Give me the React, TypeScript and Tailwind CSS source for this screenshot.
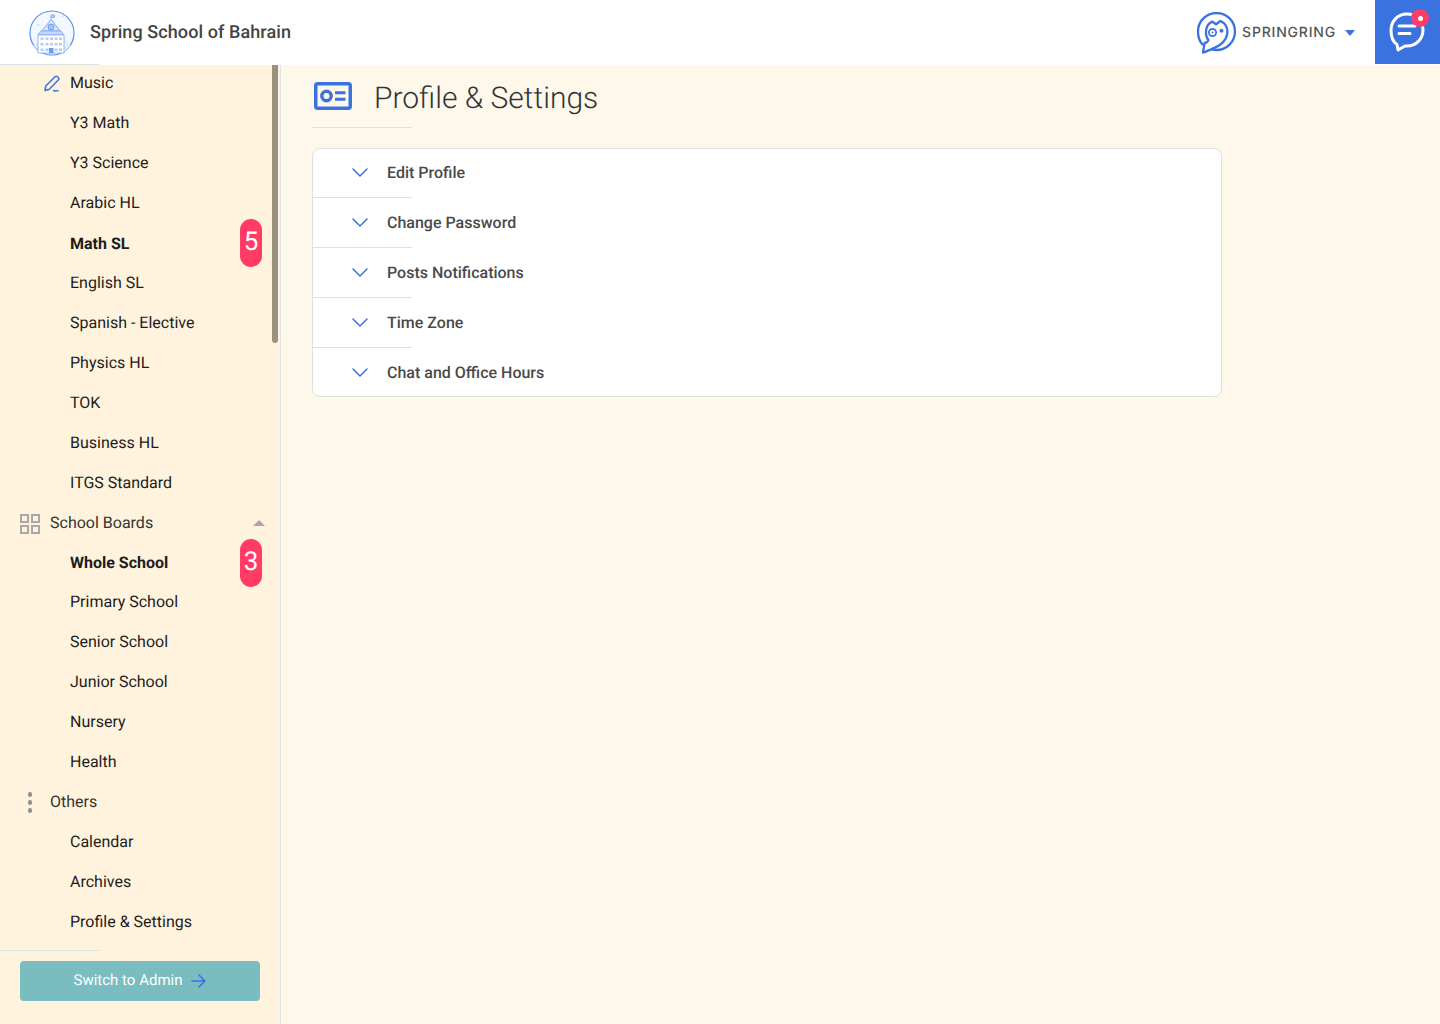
const topCourses = ['Y3 Math', 'Y3 Science', 'Arabic HL'];
const midCourses = ['English SL', 'Spanish - Elective', 'Physics HL', 'TOK', 'Business HL', 'ITGS Standard'];
const boards = ['Primary School', 'Senior School', 'Junior School', 'Nursery', 'Health'];
const others = ['Calendar', 'Archives', 'Profile & Settings'];
const sections = ['Edit Profile', 'Change Password', 'Posts Notifications', 'Time Zone', 'Chat and Office Hours'];

function SchoolLogo() {
  return (
    <svg width="46" height="46" viewBox="0 0 46 46" fill="none">
      <circle cx="23" cy="23" r="22" fill="#F3F7FE" stroke="#5A8FEF" strokeWidth="1.2" />
      <path d="M5 36c4-9 10-12 18-12s14 3 18 12l-6 6H11z" fill="#E6EEFC" />
      <path d="M22 9V5h3.500v2.500H22" stroke="#8FB0F3" strokeWidth="1" fill="#B4CBF8" />
      <path d="M13 21 22 9.500 31 21z" fill="#DCE8FC" stroke="#7FA6F2" strokeWidth="1" strokeLinejoin="round" />
      <circle cx="22" cy="17" r="3" fill="#A9C4F7" stroke="#5A8FEF" strokeWidth="0.8" />
      <path d="M9 25l3-4h20l3 4z" fill="#C5D8FA" stroke="#7FA6F2" strokeWidth="0.8" />
      <rect x="9" y="25" width="26" height="18" fill="#fff" stroke="#7FA6F2" strokeWidth="0.8" />
      <path
        d="M11.500 27.500h3v2.500h-3zM16.500 27.500h3v2.500h-3zM21 27.500h3v2.500h-3zM25.500 27.500h3v2.500h-3zM30 27.500h3v2.500h-3zM11.500 33h3v2.500h-3zM16.500 33h3v2.500h-3zM21 33h3v2.500h-3zM25.500 33h3v2.500h-3zM30 33h3v2.500h-3zM11.500 38.500h3v2.500h-3zM16.500 38.500h3v2.500h-3zM25.500 38.500h3v2.500h-3zM30 38.500h3v2.500h-3z"
        fill="#B4CBF8"
      />
      <rect x="20" y="38" width="4.500" height="5" fill="#6E9BF0" />
      <path d="M33 6.500l2.500-1M8 14.500l2.500 .8" stroke="#B4CBF8" strokeWidth="0.8" />
    </svg>
  );
}

function OwlLogo() {
  return (
    <svg width="40" height="42" viewBox="0 0 40 42" fill="none" stroke="#3A72E0" strokeWidth="2.300" strokeLinejoin="round" strokeLinecap="round">
      <path d="M5.500 32.500C2.500 29.200 1 24.600 1 19.500 1 9.300 9.300 1 19.500 1S38 9.300 38 19.500 29.700 38 19.500 38c-1.600 0-3-.2-4.500-.6" />
      <path d="M6 40.500 7.600 31c1.600-.2 3.400-1.500 3.900-2.800C9.600 25.800 8.700 22.600 9 19c.4-4.500 2.800-8 6.400-9.300l3.600 2.600 4.500-3.300 3.500 2.200c3 3 4 7.500 3 11.800-1.400 6.300-6.500 10.200-12 12.600-4.500 2-8 3.600-11.500 4.900z" />
      <circle cx="15.500" cy="20.500" r="3.600" strokeWidth="1.800" />
      <circle cx="15.500" cy="20.500" r="1" fill="#3A72E0" stroke="none" />
      <circle cx="24.500" cy="18.800" r="2" fill="#3A72E0" stroke="none" />
    </svg>
  );
}

function ChatIcon() {
  return (
    <div className="relative w-[36px] h-[40px] -ml-[1px]">
      <svg width="36" height="40" viewBox="0 0 36 40" fill="none" stroke="#fff" strokeWidth="3" strokeLinecap="round" strokeLinejoin="round">
        <path d="M18 2c9 0 16 7 16 16s-7 16-16 16h-2l-7 4-1-5.500C4 30 2 24.500 2 18 2 9 9 2 18 2z" />
        <path d="M10 14h16M10 21.500h11" />
      </svg>
      <div className="absolute -top-[3px] left-[22px] w-[18px] h-[18px] rounded-full bg-[#FF3B66] flex items-center justify-center">
        <div className="w-[5px] h-[5px] rounded-full bg-white" />
      </div>
    </div>
  );
}

function ProfileCardIcon() {
  return (
    <svg className="-mt-[6px]" width="38" height="28" viewBox="0 0 38 28">
      <rect x="1.750" y="1.750" width="34.500" height="24.500" rx="2" fill="none" stroke="#3A72E0" strokeWidth="3.500" />
      <circle cx="12.500" cy="14" r="4.700" fill="none" stroke="#3A72E0" strokeWidth="3.400" />
      <path d="M21 10.800h10.500M21 17.200h10.500" stroke="#3A72E0" strokeWidth="3" />
    </svg>
  );
}

function NavRow({ label, className = 'h-[40px]' }: { label: string; className?: string }) {
  return (
    <div className={`flex items-center pl-[70px] text-[16px] text-[#1c1c1c] ${className}`}>
      {label}
    </div>
  );
}

function CountBadge({ count }: { count: number }) {
  return (
    <span className="absolute right-[18px] top-1/2 -translate-y-1/2 w-[22px] h-[48px] rounded-[11px] bg-[#FF3B66] text-white text-[26px] leading-[46px] text-center">
      {count}
    </span>
  );
}

function Sidebar() {
  return (
    <aside className="relative w-[281px] shrink-0 flex flex-col bg-[#FFF3DD] border-r border-[#DDE3EA]">
      <div className="h-[885px] overflow-hidden">
        <div className="-mt-[2px]">
          <div className="relative h-[40px] flex items-center pl-[70px] text-[16px] text-[#1c1c1c]">
            <svg className="absolute left-[44px] top-[12px]" width="16" height="17" viewBox="0 0 16 17" fill="none" stroke="#3A72E0" strokeWidth="1.500" strokeLinecap="round" strokeLinejoin="round">
              <path d="M1 15.500 1.800 11 11 1.700c.7-.7 1.800-.7 2.500 0l.8.8c.7.7.7 1.800 0 2.500L5 14.500z" />
              <path d="M9.500 15.800H14" />
            </svg>
            Music
          </div>
          {topCourses.map((c) => (
            <NavRow key={c} label={c} />
          ))}
          <div className="relative">
            <NavRow label="Math SL" className="h-[40px] font-bold pt-[2px]" />
            <CountBadge count={5} />
          </div>
          {midCourses.map((c) => (
            <NavRow key={c} label={c} />
          ))}
          <div className="relative h-[40px] flex items-center pl-[50px] text-[16px] text-[#333]">
            <svg className="absolute left-[20px] top-[11px]" width="20" height="20" viewBox="0 0 20 20" fill="none" stroke="#A8A8A8" strokeWidth="2">
              <rect x="1" y="1" width="7" height="7" />
              <rect x="12" y="1" width="7" height="7" />
              <rect x="1" y="12" width="7" height="7" />
              <rect x="12" y="12" width="7" height="7" />
            </svg>
            School Boards
            <span className="absolute left-[253px] top-[17px] w-0 h-0 border-x-[6px] border-x-transparent border-b-[6px] border-b-[#A8A8A8]" />
          </div>
          <div className="relative">
            <NavRow label="Whole School" className="h-[39px] pt-px font-bold" />
            <CountBadge count={3} />
          </div>
          {boards.map((c) => (
            <NavRow key={c} label={c} />
          ))}
          <div className="relative h-[40px] flex items-center pl-[50px] text-[16px] text-[#333]">
            <span className="absolute left-[27.500px] top-[10px] flex flex-col gap-[3.500px]">
              <span className="w-[4.500px] h-[4.500px] rounded-full bg-[#8E8E8E]" />
              <span className="w-[4.500px] h-[4.500px] rounded-full bg-[#8E8E8E]" />
              <span className="w-[4.500px] h-[4.500px] rounded-full bg-[#8E8E8E]" />
            </span>
            Others
          </div>
          {others.map((c) => (
            <NavRow key={c} label={c} />
          ))}
        </div>
      </div>
      <div className="w-[100px] h-px bg-[#DDE3EA]" />
      <div className="px-[20px] pt-[10px]">
        <div className="h-[40px] rounded-[4px] bg-[#7ABDC1] flex items-center justify-center gap-[9px] text-[15px] text-white">
          <span className="-mt-[2px]">Switch to Admin</span>
          <svg width="15" height="14" viewBox="0 0 15 14" fill="none" stroke="#3A72E0" strokeWidth="1.500" strokeLinecap="round" strokeLinejoin="round">
            <path d="M1 7h13M8 1l6 6-6 6" />
          </svg>
        </div>
      </div>
      <div className="absolute left-[272px] top-0 w-[6px] h-[278px] bg-[#9C917F] rounded-b-[3px]" />
    </aside>
  );
}

export default function App() {
  return (
    <div className="w-[1440px] h-[1024px] overflow-hidden bg-[#FEF8EA] flex flex-col font-['Roboto',sans-serif] [text-rendering:geometricPrecision]">
      <header className="relative h-[65px] shrink-0 bg-white flex items-center">
        <div className="ml-[29px] mt-[1px]">
          <SchoolLogo />
        </div>
        <span className="ml-[15px] -mt-[1px] text-[18px] font-medium tracking-[0.09px] text-[#444]">Spring School of Bahrain</span>
        <div className="ml-auto flex items-center h-full">
          <OwlLogo />
          <span className="ml-[5px] -mt-[1px] font-['Inter',sans-serif] font-medium tracking-[0.8px] text-[14px] text-[#555]">SPRINGRING</span>
          <span className="ml-[9px] mr-[20px] w-0 h-0 border-x-[5.500px] border-x-transparent border-t-[6px] border-t-[#3A72E0]" />
          <div className="w-[65px] h-[64px] self-start bg-[#3A72E0] flex items-center justify-center">
            <ChatIcon />
          </div>
        </div>
        <div className="absolute left-0 bottom-0 w-[100px] h-px bg-[#DDE3EA]" />
      </header>
      <div className="flex flex-1 min-h-0">
        <Sidebar />
        <main className="flex-1 pl-[31px]">
          <div className="flex items-center h-[62px] pl-[2px] pt-[5px]">
            <ProfileCardIcon />
            <h1 className="ml-[22px] text-[30px] font-light text-[#333]">Profile &amp; Settings</h1>
          </div>
          <div className="w-[100px] h-px bg-[#E3E0D8]" />
          <div className="mt-[20px] w-[910px] h-[249px] bg-white border border-[#E0E0E0] rounded-[8px] overflow-hidden">
            {sections.map((s, i) => (
              <div key={s}>
                {i > 0 && <div className="w-[99px] h-px bg-[#E0E0E0]" />}
                <div className={`${i === 0 ? 'h-[48px]' : 'h-[49px]'} flex items-center pl-[39px] text-[16px] font-medium text-[#4a4a4a]`}>
                  <svg className="mr-[19px] -mt-[1px]" width="16" height="9" viewBox="0 0 16 9" fill="none" stroke="#3A72E0" strokeWidth="1.500" strokeLinecap="round" strokeLinejoin="round">
                    <path d="M1 1l7 7 7-7" />
                  </svg>
                  {s}
                </div>
              </div>
            ))}
          </div>
        </main>
      </div>
    </div>
  );
}
